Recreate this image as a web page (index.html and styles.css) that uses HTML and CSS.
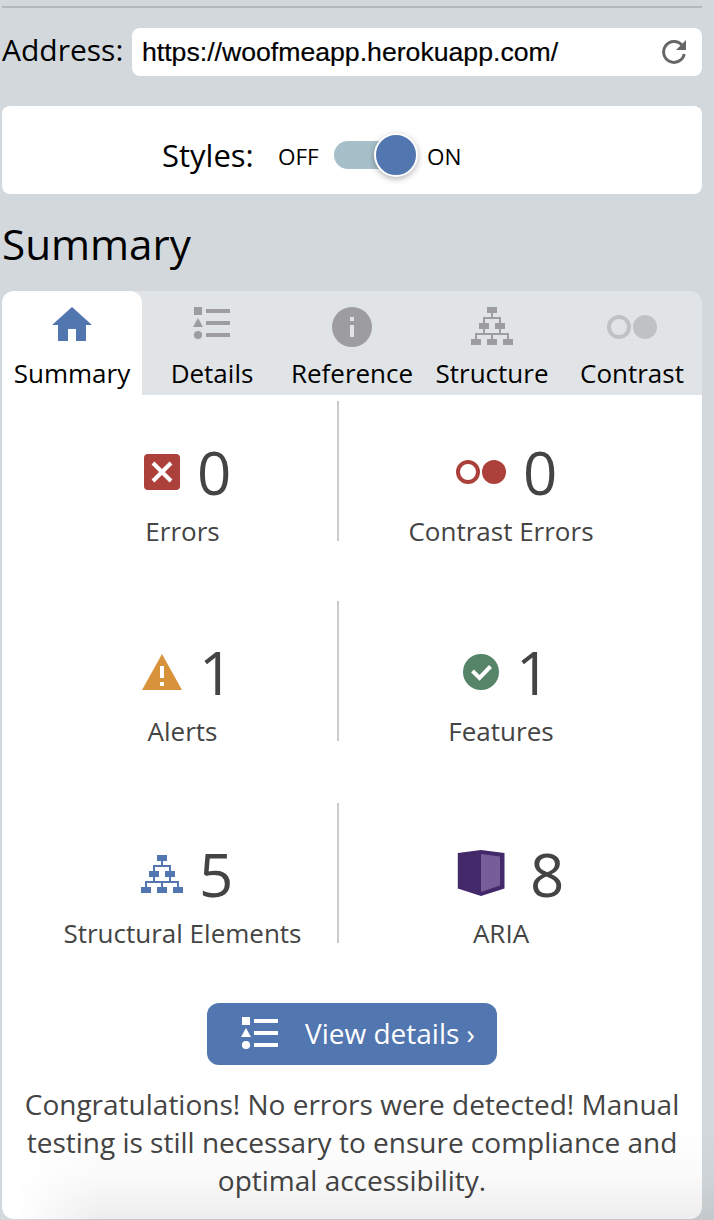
FILE: index.html
```html
<!DOCTYPE html>
<html lang="en">
<head>
<meta charset="utf-8">
<title>Summary</title>
<link rel="stylesheet" href="styles.css">
</head>
<body>
<svg class="defs" aria-hidden="true">
  <symbol id="list" viewBox="0 0 38 33"><path fill="currentColor" d="M1 0h8v8H1zM13 2h24v4H13zM13 14h24v4H13zM13 26h24v4H13zM5 11l5 9H0z"/><circle cx="5" cy="28" r="4.100" fill="currentColor"/></symbol>
  <symbol id="dots" viewBox="0 0 50 24"><circle cx="12" cy="12" r="10" fill="none" stroke="currentColor" stroke-width="4"/><circle cx="38" cy="12" r="12" fill="currentColor"/></symbol>
  <symbol id="nodes" viewBox="0 0 42 38"><path fill="currentColor" d="M16 0h10v6H16zM8 16h10v6H8zM24 16h10v6H24zM0 32h10v6H0zM16 32h10v6H16zM32 32h10v6H32z"/><path fill="none" stroke="currentColor" stroke-width="2" d="M21 6v5M13 16v-5h16v5M13 22v5M29 22v5M5 32v-5h32v5M21 27v5"/></symbol>
</svg>
<main class="page">
  <div class="address">
    <span class="address-label">Address:</span>
    <div class="address-field"><span class="url">https://woofmeapp.herokuapp.com/</span>
      <svg class="reload" width="24" height="24" viewBox="0 0 24 24"><path d="M22.200 14A10.400 10.400 0 1 1 20 5.300" fill="none" stroke="#666" stroke-width="3"/><path d="M24 0v10H14z" fill="#666"/></svg>
    </div>
  </div>
  <section class="styles-box">
    <span class="styles-label">Styles:</span><span class="state off">OFF</span>
    <span class="switch"><span class="knob"></span></span><span class="state on">ON</span>
  </section>
  <h1 class="title">Summary</h1>
  <nav class="tabs">
    <div class="tab active"><span class="tab-icon"><svg width="40" height="34" viewBox="0 0 40 34"><path fill="#5276b0" d="M20 0l20 18h-6v16H24V22h-8v12H6V18H0z"/></svg></span>Summary</div>
    <div class="tab"><span class="tab-icon"><svg width="38" height="33"><use href="#list"/></svg></span>Details</div>
    <div class="tab"><span class="tab-icon"><svg width="40" height="40" viewBox="0 0 40 40"><circle cx="20" cy="20" r="20" fill="#9d9d9f"/><path fill="#e0e4e7" d="M18 10h4v4h-4zM18 18h4v12h-4z"/></svg></span>Reference</div>
    <div class="tab"><span class="tab-icon"><svg width="42" height="38"><use href="#nodes"/></svg></span>Structure</div>
    <div class="tab"><span class="tab-icon faded"><svg width="50" height="24"><use href="#dots"/></svg></span>Contrast</div>
  </nav>
  <section class="panel">
    <div class="stats">
      <div class="stat"><div class="figure"><span class="stat-icon"><svg width="36" height="36" viewBox="0 0 36 36"><rect width="36" height="36" rx="4" fill="#ac403b"/><path d="M9 9l18 18M27 9L9 27" stroke="#fff" stroke-width="4"/></svg></span><span class="num">0</span></div><div class="label">Errors</div></div>
      <div class="stat"><div class="figure"><span class="stat-icon red"><svg width="50" height="24"><use href="#dots"/></svg></span><span class="num wide">0</span></div><div class="label">Contrast Errors</div></div>
      <div class="stat"><div class="figure"><span class="stat-icon"><svg width="40" height="36" viewBox="0 0 40 36"><path d="M20 0l20 36H0z" fill="#d8923a"/><path d="M18 12h4v12h-4zM18 28h4v4h-4z" fill="#fff"/></svg></span><span class="num mid">1</span></div><div class="label">Alerts</div></div>
      <div class="stat"><div class="figure"><span class="stat-icon"><svg width="36" height="36" viewBox="0 0 36 36"><circle cx="18" cy="18" r="18" fill="#558468"/><path d="M9.500 17l7 7L27.500 12.500" fill="none" stroke="#fff" stroke-width="4"/></svg></span><span class="num">1</span></div><div class="label">Features</div></div>
      <div class="stat"><div class="figure"><span class="stat-icon blue"><svg width="42" height="38"><use href="#nodes"/></svg></span><span class="num mid">5</span></div><div class="label">Structural Elements</div></div>
      <div class="stat"><div class="figure"><span class="stat-icon cube"><svg width="48" height="48" viewBox="0 0 48 48"><path d="M24 1l23.500 3v35.500L24 47 .8 39.500V4z" fill="#44296a"/><path d="M24 5l19 2.500v29L24 43z" fill="#785e99"/></svg></span><span class="num widest">8</span></div><div class="label">ARIA</div></div>
    </div>
    <button class="view" type="button"><svg width="38" height="33"><use href="#list"/></svg><span>View details ›</span></button>
    <p class="message">Congratulations! No errors were detected! Manual<br>testing is still necessary to ensure compliance and<br>optimal accessibility.</p>
  </section>
</main>
</body>
</html>
```
FILE: styles.css
```css
* { box-sizing: border-box; }
body { margin: 0; background: #d3d8dc; color: #000; font-family: "Open Sans", sans-serif; }
svg { display: block; flex: none; }
.defs { position: absolute; width: 0; height: 0; }
.page { position: relative; height: 1220px; padding: 6px 12px 0 2px; overflow: hidden; }
.page::after {
  content: ""; position: absolute; left: 0; right: 0; bottom: 0; height: 90px; pointer-events: none;
  background: linear-gradient(to bottom, rgba(0,0,0,0), rgba(0,0,0,.02) 50%, rgba(0,0,0,.07));
  -webkit-mask-image: linear-gradient(to right, transparent 15px, #000 100px);
  mask-image: linear-gradient(to right, transparent 15px, #000 100px);
}
.address { height: 70px; padding-top: 20px; border-top: 2px solid #b3b9bb; display: flex; justify-content: space-between; align-items: flex-start; }
.address-label { font-size: 30px; line-height: 44px; white-space: nowrap; }
.address-field { width: 570px; height: 48px; padding: 0 16px 0 10px; border-radius: 8px; background: #fff; display: flex; align-items: center; justify-content: space-between; }
.url { font: 26.650px/48px "Liberation Sans", Arial, sans-serif; -webkit-text-stroke: .2px #000; }
.styles-box { height: 88px; margin-top: 30px; padding: 10px 0 0 160px; border-radius: 8px; background: #fff; display: flex; align-items: center; white-space: nowrap; }
.styles-label { width: 116px; font-size: 31px; }
.state { font-size: 22.500px; padding-top: 3px; }
.off { width: 56px; }
.switch { width: 82px; height: 28px; margin-right: 11px; border-radius: 14px; background: #a6bfc9; display: flex; align-items: center; justify-content: flex-end; }
.knob { width: 44px; height: 44px; flex: none; margin-right: -2px; border: 2px solid #fff; border-radius: 50%; background: #5276b0; box-shadow: 0 2px 6px rgba(0,0,0,.3); }
.title { height: 97px; margin: 0; padding-top: 20px; font-size: 42.200px; line-height: 60px; font-weight: 400; }
.tabs { display: grid; grid-template-columns: repeat(5, 140px); height: 104px; background: #e0e4e7; border-radius: 12px 12px 0 0; }
.tab { padding-top: 16px; text-align: center; font-size: 26px; line-height: 36px; border-radius: 12px 12px 0 0; }
.active { background: #fff; }
.tab-icon { height: 48px; color: #9d9d9f; display: flex; justify-content: center; align-items: flex-start; }
.faded { color: #c0c1c4; padding-top: 8px; }
.panel { height: 824px; padding-top: 6px; background: #fff; border-radius: 0 0 12px 12px; color: #444; }
.stats { display: grid; grid-template-columns: 313px 324px; grid-template-rows: 200px 202px 200px; margin-left: 24px; }
.stat { height: 140px; text-align: center; }
.stat:nth-child(odd) { border-right: 2px solid #ccc; padding-left: 2px; }
.figure { height: 112px; display: flex; align-items: center; padding: 30px 0 0 104px; }
.stat:nth-child(even) .figure { padding-left: 112px; }
.stat-icon { width: 60px; display: flex; justify-content: center; }
.num { margin-left: 5px; font-size: 60px; line-height: 82px; }
.mid { margin-left: 7px; }
.wide { margin-left: 12px; }
.widest { margin-left: 19px; }
.cube { margin-top: -2px; }
.red { color: #ac403b; }
.blue { color: #5276b0; }
.label { font-size: 26px; line-height: 36px; }
.view { width: 290px; height: 62px; margin: 0 auto; padding: 0 0 2px 34px; border: 0; border-radius: 12px; background: #5276b0; color: #fff; display: flex; align-items: center; gap: 26px; font: 28px/38px "Open Sans", sans-serif; white-space: nowrap; }
.view span { margin-top: -1px; }
.message { margin: 20px 0 0; text-align: center; font-size: 28px; line-height: 38px; }
```
